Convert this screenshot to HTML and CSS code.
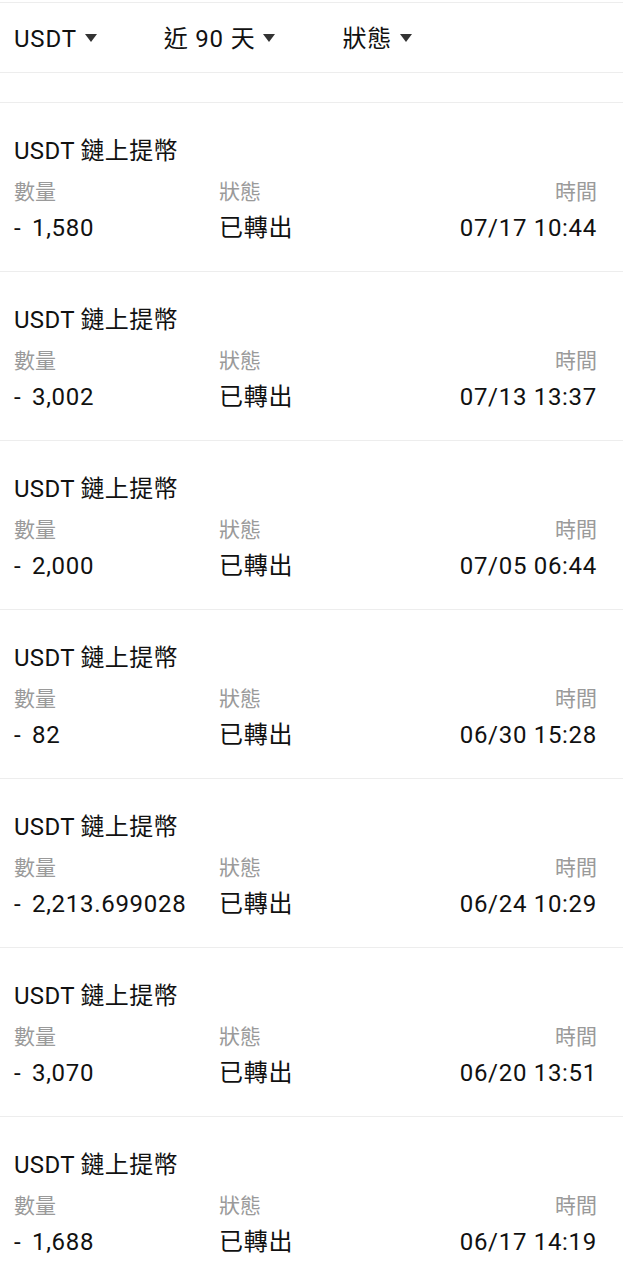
FILE: index.html
```html
<html>
    <head>
        <meta charset="utf-8">
        <link rel="stylesheet" href="styles.css">
    </head>
    <body>
        <div class="filter-bar">
            <div class="filter-item">USDT<span class="caret"></span></div>
            <div class="filter-item">近 90 天<span class="caret"></span></div>
            <div class="filter-item">狀態<span class="caret"></span></div>
        </div>
        <div class="spacer"></div>

        <div class="record">
            <div class="record-title">USDT 鏈上提幣</div>
            <div class="record-grid">
                <div class="label">數量</div><div class="label">狀態</div><div class="label right">時間</div>
                <div class="value amount">- 1,580</div><div class="value">已轉出</div><div class="value right">07/17 10:44</div>
            </div>
        </div>
        <div class="record">
            <div class="record-title">USDT 鏈上提幣</div>
            <div class="record-grid">
                <div class="label">數量</div><div class="label">狀態</div><div class="label right">時間</div>
                <div class="value amount">- 3,002</div><div class="value">已轉出</div><div class="value right">07/13 13:37</div>
            </div>
        </div>
        <div class="record">
            <div class="record-title">USDT 鏈上提幣</div>
            <div class="record-grid">
                <div class="label">數量</div><div class="label">狀態</div><div class="label right">時間</div>
                <div class="value amount">- 2,000</div><div class="value">已轉出</div><div class="value right">07/05 06:44</div>
            </div>
        </div>
        <div class="record">
            <div class="record-title">USDT 鏈上提幣</div>
            <div class="record-grid">
                <div class="label">數量</div><div class="label">狀態</div><div class="label right">時間</div>
                <div class="value amount">- 82</div><div class="value">已轉出</div><div class="value right">06/30 15:28</div>
            </div>
        </div>
        <div class="record">
            <div class="record-title">USDT 鏈上提幣</div>
            <div class="record-grid">
                <div class="label">數量</div><div class="label">狀態</div><div class="label right">時間</div>
                <div class="value amount">- 2,213.699028</div><div class="value">已轉出</div><div class="value right">06/24 10:29</div>
            </div>
        </div>
        <div class="record">
            <div class="record-title">USDT 鏈上提幣</div>
            <div class="record-grid">
                <div class="label">數量</div><div class="label">狀態</div><div class="label right">時間</div>
                <div class="value amount">- 3,070</div><div class="value">已轉出</div><div class="value right">06/20 13:51</div>
            </div>
        </div>
        <div class="record">
            <div class="record-title">USDT 鏈上提幣</div>
            <div class="record-grid">
                <div class="label">數量</div><div class="label">狀態</div><div class="label right">時間</div>
                <div class="value amount">- 1,688</div><div class="value">已轉出</div><div class="value right">06/17 14:19</div>
            </div>
        </div>
    </body>
</html>
```

FILE: styles.css
```css
body {
    margin: 0;
    padding-top: 2px;
    background-color: white;
    color: #111;
    font-family: Roboto, "Noto Sans CJK TC", sans-serif;
}

.filter-bar {
    display: flex;
    align-items: center;
    gap: 67px;

    height: 69px;
    padding: 2px 14px 0 14px;
    box-sizing: border-box;
    height: 71px;

    border-top: 1px solid #ededed;
    border-bottom: 1px solid #ededed;
}

.filter-item {
    display: flex;
    align-items: center;

    font-size: 24px;
    line-height: 32px;
    letter-spacing: 0.8px;
}

.caret {
    width: 0;
    height: 0;
    margin-left: 8px;
    margin-bottom: 2px;

    border-left: 6px solid transparent;
    border-right: 6px solid transparent;
    border-top: 8px solid #333;
}

.spacer {
    height: 29px;
    border-bottom: 1px solid #ededed;
}

.record {
    height: 169px;
    box-sizing: border-box;
    padding: 32px 26px 0 14px;

    border-bottom: 1px solid #ededed;
}

.record-title {
    font-size: 24px;
    line-height: 32px;
    letter-spacing: 0.3px;
}

.record-grid {
    display: grid;
    grid-template-columns: 205px 1fr auto;
    margin-top: 11px;
}

.label {
    font-size: 21px;
    line-height: 28px;
    color: #9a9a9a;
    margin-bottom: 6px;
}

.value {
    font-size: 24px;
    line-height: 32px;
    letter-spacing: 0.7px;
}

.amount {
    word-spacing: 4px;
}

.right {
    text-align: right;
}
```
